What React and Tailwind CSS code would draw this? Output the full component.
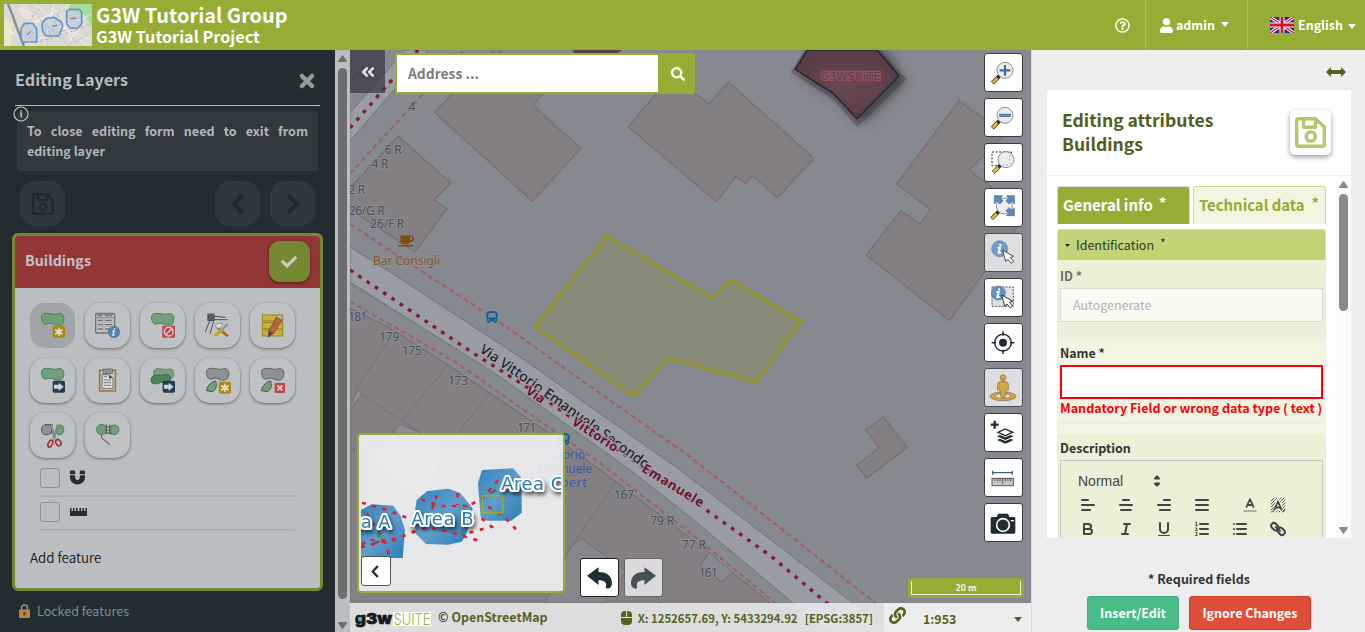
import React from 'react';
import { FaSearch, FaRegQuestionCircle, FaUser, FaCheck, FaLink, FaMagnet, FaAngleDoubleLeft, FaBus, FaCoffee } from 'react-icons/fa';

const Caret = ({ className }) => (
  <svg viewBox="0 0 10 6" className={className} fill="currentColor"><path d="M0 0H10L5 6Z" /></svg>
);

const SaveIcon = ({ className }) => (
  <svg viewBox="0 0 31 31" className={className} fill="none" stroke="currentColor" strokeWidth="3.4" strokeLinejoin="round">
    <path d="M3.5 1.7H20.5L29.3 10V27.5Q29.3 29.3 27.5 29.3H3.5Q1.7 29.3 1.7 27.5V3.5Q1.7 1.7 3.5 1.7Z" />
    <path d="M8.5 2V10.3H20.5V2" />
    <circle cx="15.8" cy="19.5" r="4.6" />
  </svg>
);

/* ---------- header ---------- */

const Thumb = () => (
  <svg viewBox="0 0 264 126" className="h-[42px] w-[88px]">
    <rect width="264" height="126" fill="#dcd8d6" />
    <path d="M0 40L26 60L20 126H0Z" fill="#e9e6cb" />
    <path d="M196 0H264V70L240 30L200 22Z" fill="#a5dd98" />
    <path d="M60 0L110 50L90 70L40 20Z" fill="#e6e1df" />
    <g stroke="#fff" strokeWidth="3" opacity=".6" fill="none">
      <path d="M60 20L264 110M90 0L250 126M150 0L120 126M20 90L200 0M60 126L264 30M180 126L240 60M0 70L90 126M210 126L170 30" />
    </g>
    <g stroke="#c9b9b5" strokeWidth="2" fill="none">
      <path d="M100 100L260 60M80 20L190 120M130 110L170 10M200 120L264 84M70 60L110 10" />
    </g>
    <path d="M12 0C30 40 40 80 60 126" stroke="#8c8c8c" strokeWidth="7" fill="none" />
    <g stroke="#dd6b5e" strokeWidth="3" strokeDasharray="4 12" fill="none">
      <path d="M70 90L100 86M130 70L165 62M196 46L236 40M110 112L240 70M84 36L96 34" />
    </g>
    <g fill="#a7c4dd" fillOpacity=".4" stroke="#5c98c9" strokeWidth="5" strokeLinejoin="round">
      <path d="M52 72L62 58H86L98 74V114H56L50 100Z" />
      <path d="M114 58L126 44L150 40L172 54L176 68L164 96H126L116 82Z" />
      <path d="M188 22L196 16H226L233 26V60L222 72H198L188 60Z" />
    </g>
    <path d="M70 92L80 82M148 66L160 64M200 44L214 42" stroke="#b2493f" strokeWidth="3" />
  </svg>
);

const Flag = () => (
  <svg viewBox="0 0 72 48" className="h-4 w-6">
    <rect width="72" height="48" fill="#1f2b7b" />
    <path d="M0 0L72 48M72 0L0 48" stroke="#fff" strokeWidth="10" />
    <path d="M0 0L72 48M72 0L0 48" stroke="#d5152e" strokeWidth="4" />
    <path d="M36 0V48M0 24H72" stroke="#fff" strokeWidth="15" />
    <path d="M36 0V48M0 24H72" stroke="#d5152e" strokeWidth="9" />
  </svg>
);

const Header = () => (
  <header className="flex h-[50px] w-full shrink-0 bg-[#95ac35] font-bold text-white">
    <div className="flex flex-1 gap-1 pl-1 pt-1">
      <Thumb />
      <div className="flex flex-col">
        <span className="text-[19.95px] leading-[22px]">G3W Tutorial Group</span>
        <span className="text-[16.23px] leading-[21px]">G3W Tutorial Project</span>
      </div>
    </div>
    <div className="flex w-[45px] items-center justify-center pr-px text-[15px]"><span><FaRegQuestionCircle /></span></div>
    <div className="flex w-[102px] items-center border-l border-[#a7bb57] pl-3.5 text-[12.4px]">
      <FaUser className="h-[15px] w-[13px]" />
      <span className="ml-[3px] leading-5">admin</span>
      <Caret className="ml-[6px] mb-0.5 h-[5px] w-2" />
    </div>
    <div className="flex w-[118px] items-center border-l border-[#a7bb57] pl-[22px] text-[12.48px]">
      <Flag />
      <span className="ml-[4px] leading-5">English</span>
      <Caret className="ml-[5px] mt-0.5 h-[5px] w-2" />
    </div>
  </header>
);

/* ---------- editing tool icons (135 x 135 grid) ---------- */

const BLOB = 'M35 49C31 35 41 30 54 31C66 32 72 36 82 33C96 29 104 37 101 52C99 67 87 68 76 65C66 61 62 59 54 62C42 66 38 61 35 49Z';
const Blob = ({ fill = '#6fa07b', stroke = '#4f7d59' }) => <path d={BLOB} fill={fill} stroke={stroke} strokeWidth="3" />;
const Badge = ({ fill }) => <rect x="68" y="68" width="37" height="36" rx="5" fill={fill} />;
const Star = () => (
  <g stroke="#e0e0d8" strokeWidth="5" strokeLinecap="round"><path d="M87 76V97M77 81L96 92M96 81L77 92" /><circle cx="87" cy="86.500" r="4" fill="#b3940f" /></g>
);
const Arrow = () => <path d="M72 80H86V74L101 86L86 99V92H72Z" fill="#ccd2d6" />;

const tools = [
  { id: 'add', active: true, icon: <><Blob /><Badge fill="#ab8c12" /><Star /></> },
  { id: 'attrs', icon: <>
    <rect x="32" y="31" width="57" height="59" rx="3" fill="#c3c5c6" stroke="#6e7173" strokeWidth="4" />
    <path d="M32 34H89M32 44H89" stroke="#8a8d8f" strokeWidth="4" />
    <path d="M38 38H52M60 38H82M38 52H54M60 52H82M38 65H54M60 65H82M38 78H54M60 78H72" stroke="#6e7173" strokeWidth="4" />
    <path d="M57 44V88M34 58H88M34 71H88" stroke="#999c9e" strokeWidth="2" />
    <circle cx="87" cy="87" r="17" fill="#5681b4" stroke="#446a98" strokeWidth="2" />
    <path d="M89 75L88 79M82 84H87L84 97H89" stroke="#dfe4ea" strokeWidth="4.500" fill="none" /></> },
  { id: 'delete', icon: <><Blob /><rect x="67" y="68" width="38" height="36" fill="#b9474c" /><circle cx="86" cy="86" r="13" fill="none" stroke="#dccaca" strokeWidth="4.500" /><path d="M77 95L95 77" stroke="#dccaca" strokeWidth="4.500" /></> },
  { id: 'vertex', icon: <>
    <rect x="37" y="32" width="22" height="22" fill="#4a4d4f" /><path d="M37 32L59 54M59 32L37 54" stroke="#8a8d8f" strokeWidth="2" />
    <path d="M58 40L92 43M56 50H98M44 54L31 86M56 54L45 92" stroke="#4d5052" strokeWidth="3" />
    <path d="M66 73L99 100" stroke="#9f6c1d" strokeWidth="8" /><path d="M60 68C70 56 82 62 84 64L72 78Z" fill="#dadcdc" stroke="#6f7274" strokeWidth="2" />
    <path d="M98 62L82 80" stroke="#8b8e90" strokeWidth="6" /><path d="M81 80L60 98" stroke="#c5a528" strokeWidth="10" /></> },
  { id: 'multiattrs', icon: <>
    <g fill="#c9b23b" stroke="#97811e" strokeWidth="3"><rect x="37" y="36" width="61" height="18" /><rect x="37" y="59" width="61" height="18" /><rect x="37" y="81" width="61" height="18" /></g>
    <path d="M56 84L84 34L100 43L72 90L55 102Z" fill="#b5643b" stroke="#6e4433" strokeWidth="2" /><path d="M84 34L100 43L96 50L80 41Z" fill="#b4b6b7" /><path d="M57 84L71 91L54 103Z" fill="#474b4d" /></> },
  { id: 'move', icon: <><Blob /><Badge fill="#243c50" /><Arrow /></> },
  { id: 'paste', icon: <>
    <rect x="44" y="37" width="47" height="62" fill="#c9cbcc" stroke="#a17734" strokeWidth="5" /><rect x="54" y="33" width="28" height="14" fill="#8f9293" stroke="#5c5f61" strokeWidth="2" />
    <path d="M51 50H72L84 61V92H51Z" fill="#d9dadb" stroke="#6e7173" strokeWidth="3" /><path d="M56 56H66M56 66H78M56 74H78M56 82H78" stroke="#777a7c" strokeWidth="3" /><path d="M72 50V61H84" fill="#444" /></> },
  { id: 'copy', icon: <>
    <g transform="translate(10 4) scale(.9)"><Blob fill="#7c9c80" stroke="#617e66" /></g>
    <path d="M33 68C33 54 42 50 52 51C66 55 74 48 84 50C96 54 92 72 82 74C70 74 66 70 56 76C42 80 33 76 33 68Z" fill="#4e8556" stroke="#3b6a43" strokeWidth="3" /><Badge fill="#243c50" /><Arrow /></> },
  { id: 'addpart', icon: <><Blob fill="#8e9193" stroke="#606365" /><path d="M34 98C38 80 52 70 62 69C66 82 64 96 52 101Z" fill="#6fa07b" stroke="#42574a" strokeWidth="3" /><g transform="translate(3 3)"><Badge fill="#ab8c12" /><Star /></g></> },
  { id: 'deletepart', icon: <><Blob fill="#8e9193" stroke="#606365" /><path d="M34 98C38 80 52 70 62 69C66 82 64 96 52 101Z" fill="#6fa07b" stroke="#42574a" strokeWidth="3" /><rect x="74" y="74" width="31" height="31" rx="4" fill="#b9474c" /><path d="M82 82L97 97M97 82L82 97" stroke="#dccaca" strokeWidth="6" /></> },
  { id: 'split', icon: <>
    <path d="M35 55C32 38 44 32 60 35L66 34L64 60C54 68 38 68 35 55Z" fill="#8e9193" stroke="#4f5254" strokeWidth="3" />
    <path d="M82 38C94 32 104 40 101 54C98 66 88 67 80 62Z" fill="#6fa07b" stroke="#4f7d59" strokeWidth="3" />
    <path d="M66 34L72 76L76 76L84 36L74 58Z" fill="#8d9092" /><path d="M64 34L72 80M82 34L72 80" stroke="#85888a" strokeWidth="5" />
    <ellipse cx="61" cy="92" rx="6" ry="11" transform="rotate(25 61 92)" fill="none" stroke="#9c2f3a" strokeWidth="5" /><ellipse cx="85" cy="89" rx="7" ry="10" transform="rotate(-35 85 89)" fill="none" stroke="#9c2f3a" strokeWidth="5" /></> },
  { id: 'merge', icon: <>
    <path d="M35 53C33 38 44 32 58 36L64 40V58C54 68 39 68 35 53Z" fill="#6fa07b" stroke="#4f7d59" strokeWidth="3" />
    <path d="M74 40C88 32 104 36 101 54C98 66 84 68 74 60Z" fill="#6fa07b" stroke="#4f7d59" strokeWidth="3" />
    <path d="M60 42H80M60 51H80M60 60H80M65 34V64M74 35V64" stroke="#4d5052" strokeWidth="2.500" /><path d="M50 66C46 82 62 78 74 96" stroke="#63676a" strokeWidth="3.500" fill="none" /></> },
];

const SideButton = ({ children }) => (
  <div className="flex size-[45px] items-center justify-center rounded-[15px] bg-[#2f383e] text-[#20292e]">{children}</div>
);

const Sidebar = () => (
  <aside className="flex w-[335px] shrink-0 flex-col bg-[#222d32]">
    <div className="ml-[15px] mr-[15px] flex h-[56px] items-center justify-between border-b border-[#b9bcbf] pt-0.5">
      <h2 className="text-[16.19px] font-bold leading-6 text-[#b8bbbe]">Editing Layers</h2>
      <svg viewBox="0 0 16 16" className="mr-[5px] mt-1 size-4" fill="none" stroke="#97999c" strokeWidth="4.500" strokeLinecap="round"><path d="M3 3L13 13M13 3L3 13" /></svg>
    </div>
    <div className="relative ml-[17px] mr-[17px] mt-[5px] h-[60px] rounded-[3px] bg-[#30393e] p-2.5 text-justify text-[12.56px] font-bold leading-5 text-[#b3b6b9]">
      <svg viewBox="0 0 16 16" className="absolute -left-[4px] -top-[5px] size-4" fill="none" stroke="#c3c6c9" strokeWidth="1.200"><circle cx="8" cy="8" r="7" /><path d="M8 4.200V5.600M7 7.200H8.300V11.500" strokeWidth="1.500" /></svg>
      To close editing form need to exit from editing layer
    </div>
    <div className="ml-5 mr-5 mt-2.5 flex">
      <SideButton><SaveIcon className="size-[22px]" /></SideButton>
      <div className="ml-auto flex gap-2.5">
        <SideButton><svg viewBox="0 0 24 24" className="size-6" fill="none" stroke="currentColor" strokeWidth="4"><path d="M17 3L8 12L17 21" /></svg></SideButton>
        <SideButton><svg viewBox="0 0 24 24" className="size-6" fill="none" stroke="currentColor" strokeWidth="4"><path d="M7 3L16 12L7 21" /></svg></SideButton>
      </div>
    </div>
    <section className="ml-3 mt-[7px] flex h-[358px] w-[311px] flex-col overflow-hidden rounded-[6px] border-[3px] border-[#748932] bg-[#bbbec1]">
      <div className="flex h-[52px] shrink-0 items-start justify-between bg-[#933636] pl-2.5 pr-2.5 pt-[5px]">
        <h3 className="mt-[9px] text-[14.29px] font-bold leading-5 text-[#c3c2c5]">Buildings</h3>
        <div className="flex size-[41px] items-center justify-center rounded-[11px] bg-[#748932] shadow-[0_1px_3px_rgba(0,0,0,0.5)]"><FaCheck className="mr-px size-4 text-[#c8cacb]" /></div>
      </div>
      <div className="ml-[15px] mt-[15px] grid grid-cols-[repeat(5,45px)] gap-2.5">
        {tools.map((t) => (
          <div key={t.id} className={t.active ? 'size-[45px] rounded-[15px] bg-[#a2a5a8]' : 'size-[45px] rounded-[15px] bg-[#bfc2c5] shadow-[0_1px_3px_rgba(0,0,0,0.45)]'}>
            <svg viewBox="0 0 135 135" className="size-[45px]">{t.icon}</svg>
          </div>
        ))}
      </div>
      <div className="ml-[25px] mt-[10px] flex h-[29px] w-[255px] items-start border-b-2 border-[#acafb2] pb-2">
        <span className="size-5 rounded-[3px] border border-[#8f9294]" />
        <FaMagnet className="ml-[10px] mt-[2px] size-[15px] text-[#222d32]" />
      </div>
      <div className="ml-[25px] mt-[5px] flex h-[29px] w-[255px] items-start border-b-2 border-[#acafb2] pb-2">
        <span className="size-5 rounded-[3px] border border-[#8f9294]" />
        <svg viewBox="0 0 17 8" className="ml-[10px] mt-1.5 h-2 w-[17px]"><path d="M0 0H1.500V3H3V0H4.500V3H6V0H7.500V3H9.500V0H11V3H12.500V0H14V3H15.500V0H17V8H0Z" fill="#222d32" /></svg>
      </div>
      <p className="ml-[15px] mt-[14px] text-[13.4px] font-[350] leading-6 text-[#15191b]">Add feature</p>
    </section>
    <div className="ml-[19px] mt-2.5 flex h-5 items-center gap-[7px] text-[12.5px] leading-5 text-[#7a8f98]">
      <svg viewBox="0 0 11 14" className="h-3.5 w-[11px]"><path d="M2.500 6V4a3 3 0 0 1 6 0V6" fill="none" stroke="#8f9294" strokeWidth="1.500" /><rect y="5.500" width="11" height="8.500" rx="1" fill="#bd8440" /><path d="M5.500 8V11.500" stroke="#4c3c3a" strokeWidth="2" /></svg>
      Locked features
    </div>
  </aside>
);

const Arrowhead = ({ down }) => (
  <svg viewBox="0 0 9 7" className={down ? 'h-[7px] w-[9px] rotate-180' : 'h-[7px] w-[9px]'} fill="currentColor"><path d="M4 .4Q4.500 0 5 .4L9 6Q9 7 8 7H1Q0 7 0 6Z" /></svg>
);

/* ---------- map ---------- */

const houseNumbers = [
  ['4', 411.7, 111, 6], ['6 R', 393.3, 153.500, 17], ['4 R', 380, 168, 17], ['2 R', 356.7, 194, 17], ['26/G R', 366.7, 215, 36], ['26/F R', 387.3, 228, 34],
  ['181', 357.7, 321, 19], ['179', 389.3, 341, 20], ['175', 411.7, 355, 20], ['173', 458, 385, 20], ['171', 526.7, 432, 19],
  ['167', 624, 499, 20], ['79 R', 662.3, 525, 24], ['77 R', 694, 549, 24], ['161', 708.3, 577, 19], ['159', 781.7, 616, 19],
];

const MapCanvas = () => (
  <svg viewBox="350 50 681 582" className="h-[582px] w-[681px]" fontFamily="'Noto Sans', sans-serif">
    <defs>
      <filter id="shade" x="-50%" y="-50%" width="200%" height="200%"><feGaussianBlur stdDeviation="6" /></filter>
      <radialGradient id="red"><stop offset="0" stopColor="#6a4750" /><stop offset="1" stopColor="#5a3d48" /></radialGradient>
    </defs>
    <rect x="350" y="50" width="681" height="582" fill="#868990" />
    <path d="M350 113L405 50H428L350 141Z" fill="#9a9ca5" stroke="#74767e" />
    <g fill="#837f82" stroke="#786f73" strokeWidth="1.200">
      <path d="M398 136L451 183L434 200L447 209L415 252L350 209V188Z" />
      <path d="M434.300 112.300L497 47L520 72L560 72L533.300 106L581 148.300L532.300 201.300Z" />
      <path d="M628 126.700L661 88L695 93L709 104L728.300 82L814 158.300L777.700 197.700L752 175.300L746 184L736 176.700L716.700 202Z" />
      <path d="M959.300 100.700L1005 134L969.300 170L991.700 187.300L1018 226L949.300 320.700L866 255L901 210.700L920 224L930.300 209.300L896.700 184Z" />
      <path d="M883.300 416.700L865.700 430L879 447.700L856.700 465L866.700 478.300L907 447.700Z" />
      <path d="M350 308L388 327L448 365L490 393L540 427L607 475L710 553L700 565L722 582L732 572L806 632H350Z" />
    </g>
    <g fill="none" stroke="#786f73">
      <path d="M388 341.700L355 390L401.700 420.700L448 365M490 393L443 452M401.700 420.700L445 450M350 447L400 480M616 482L570 548L628 572M644 560L660 603" />
      <path d="M351 405L357 390L362 394L351 408Z" fill="#8b8d93" />
      <path d="M400 424L446 444L425 500L371 462Z" fill="#8b8d93" />
      <path d="M570 548L581 538L626 571L604 603H545Z" fill="#86868d" />
      <path d="M700 565L722 582L732 572L710 553Z" fill="#868990" />
    </g>
    <path d="M350 247L387 270L520 357L680 470L853 603L890 632H831L793 603L690 517L630 470L493 372L350 283Z" fill="#9a9ca5" stroke="#70727a" />
    <path d="M350 282L493 372L630 470L690 517L793 603" fill="none" stroke="#787a82" />
    <g fill="none" stroke="#7e90a3" strokeWidth="2" strokeDasharray="4 3"><path d="M350 171L463 49" /></g>
    <g fill="none" stroke="#a85c5f" strokeWidth="2" strokeDasharray="5 3.500">
      <path d="M350 81.700L376.700 50" /><path d="M350 173.500L463 50.500" />
      <path d="M350 224L435 280L491.700 316.700L690 456.700L880 606.700" />
      <path d="M350 301.700L455 361.700L600 463L690 533L780 606.700" />
    </g>
    <g fill="none" stroke="#8b1a2c" strokeWidth="3.400" strokeDasharray="3.800 6.200">
      <path d="M350 128L418 50" />
      <path d="M350 270L473 353L527 387L640 465L701.700 506.700L771.700 556.700L826.700 603L855 628" />
    </g>
    <g>
      <path d="M804 50L790.700 72.300L834 100L857 127.300L906.700 79.300L880 50Z" fill="#716b70" />
      <path d="M812 55L800 74L840 100L862 124L905 82L885 50Z" fill="#33323a" opacity=".75" filter="url(#shade)" />
      <path d="M807.300 50L795.300 69.300L833.300 93.300L857 118.700L899 75.700L877 50Z" fill="url(#red)" stroke="#1f2731" strokeWidth="1.500" />
      <path d="M572 50H622L618 53H574Z" fill="#5a3d48" />
      <text x="820.500" y="80" textLength="60" fontFamily="'DejaVu Sans', sans-serif" fontSize="11" fill="#54405a" stroke="#94505c" strokeWidth="2.500" paintOrder="stroke">G3WSUITE</text>
    </g>
    <path d="M606.700 236L535 326.700L633.300 396L669.300 358.300L756 382L801 321.300L730.700 280L712.300 298Z" fill="#888b79" stroke="#919239" strokeWidth="3.800" />
    <g fontSize="12" fill="#4b4e58" textAnchor="middle" stroke="#92949b" strokeOpacity=".7" strokeWidth="2" paintOrder="stroke">
      {houseNumbers.map(([t, x, y, w]) => <text key={t} x={x} y={y} textLength={w}>{t}</text>)}
    </g>
    <FaCoffee x="398" y="233" size="16" color="#7f4d12" />
    <text x="373" y="264.500" fontSize="12" textLength="67" fill="#80592d" stroke="#92949b" strokeOpacity=".6" strokeWidth="2" paintOrder="stroke">Bar Consigli</text>
    <FaBus x="486" y="311" size="12" color="#10639a" />
    <FaBus x="558" y="433" size="12" color="#10639a" />
    <g fontSize="12" fill="#3a5daa" textAnchor="middle">
      <text x="564.500" y="458.500" textLength="41">Vittorio</text><text x="564.500" y="472.500" textLength="55">Emanuele</text><text x="564.500" y="486.500" textLength="44">Filibert</text>
    </g>
    <path id="street" d="M479 352Q555 402 700 510" fill="none" />
    <text fontSize="14" fontWeight="500" fill="#20232b" stroke="#a0a2aa" strokeWidth="2" paintOrder="stroke"><textPath href="#street" textLength="204">Via Vittorio Emanuele Secondo</textPath></text>
    <g fontWeight="700" fill="#6d1231" stroke="#a0a2aa" strokeWidth="2" paintOrder="stroke">
      <text transform="translate(525 393) rotate(34)" textLength="20" fontSize="13">Via</text>
      <text transform="translate(571 424) rotate(33)" textLength="52" fontSize="13">Vittorio</text>
      <text transform="translate(641 471) rotate(31.500)" textLength="70" fontSize="13">Emanuele</text>
    </g>
  </svg>
);

const Glass = ({ cx = 63, cy = 52 }) => (
  <>
    <path d={`M${cx - 20} ${cy + 20}L${cx - 38} ${cy + 38}`} stroke="#3b3417" strokeWidth="12" />
    <path d={`M${cx - 22} ${cy + 22}L${cx - 37} ${cy + 37}`} stroke="#e9bf3b" strokeWidth="8" />
    <circle cx={cx - 19} cy={cy + 19} r="6" fill="#2b2b2b" />
    <circle cx={cx} cy={cy} r="24" fill="#ececec" stroke="#8b8e90" strokeWidth="3" />
  </>
);
const InfoDot = ({ x, y, r }) => (
  <>
    <circle cx={x} cy={y} r={r} fill="#628fc5" stroke="#4e78ab" strokeWidth="2" />
    <path transform={`translate(${x} ${y})`} d="M3 -14L1 -8M-6 -3H1L-3 12H4" stroke="#fff" strokeWidth="6" fill="none" />
  </>
);
const Cursor = ({ x, y }) => <path transform={`translate(${x} ${y})`} d="M0 0L9 33L16 27L26 39L33 33L23 22L33 18Z" fill="#fff" stroke="#333" strokeWidth="3" strokeLinejoin="round" />;

const mapTools = [
  { id: 'zoomin', icon: <><Glass /><path d="M63 36V68M47 52H79" stroke="#3c6ea8" strokeWidth="7" /></> },
  { id: 'zoomout', icon: <><Glass /><path d="M46 52H80" stroke="#2f5b91" strokeWidth="9" /><path d="M48 52H78" stroke="#5f93cf" strokeWidth="5" /></> },
  { id: 'zoombox', icon: <><rect x="24" y="27" width="58" height="41" fill="none" stroke="#222" strokeWidth="3" strokeDasharray="6 5" /><Glass cx={66} cy={50} /><path d="M78 36V62M55 66H78" stroke="#bbb" strokeWidth="3" strokeDasharray="6 5" /></> },
  { id: 'extent', icon: <><Glass cx={61} cy={54} /><g fill="#5b8bbd" stroke="#3d6c9e" strokeWidth="2"><path d="M31 23H56L49 31L57 39L48 48L39 40L31 48Z" /><path d="M91 23H67L74 31L66 39L75 48L83 40L91 48Z" /><path d="M91 83H67L74 76L66 68L75 59L83 67L91 59Z" /></g></> },
  { id: 'query', dim: true, icon: <g opacity=".85"><InfoDot x={47} y={47} r={24} /><Cursor x={56} y={52} /></g> },
  { id: 'querybox', icon: <><rect x="24" y="27" width="64" height="58" fill="#e2e2e2" stroke="#444" strokeWidth="2.500" strokeDasharray="7 3" /><InfoDot x={43} y={45} r={21} /><Cursor x={53} y={51} /></> },
  { id: 'locate', icon: <g stroke="#222d32" fill="none" strokeWidth="4.500"><circle cx="57" cy="59" r="25" /><circle cx="57" cy="59" r="9" fill="#222d32" strokeWidth="6" /><path d="M57 25V38M57 80V93M23 59H36M78 59H91" /></g> },
  { id: 'street', dim: true, icon: <g fill="#d7a73d" stroke="#8b7a55" strokeWidth="2.500"><path fillRule="evenodd" d="M18 85A39 13 0 0 0 96 85A39 13 0 0 0 18 85ZM33 84A24 7 0 0 1 81 84A24 7 0 0 1 33 84Z" /><path d="M45 42Q57 38 69 42Q74 44 73 52V66H66L63 88H51L48 66H41V52Q40 44 45 42Z" /><circle cx="57" cy="29" r="8.500" /></g> },
  { id: 'addlayer', icon: <g><path d="M32 23V47M20 35H44" stroke="#222d32" strokeWidth="7" /><g fill="#222d32"><path d="M39 81L64 92L89 81L80 77L64 84L48 77Z" /><path d="M39 70L64 81L89 70L80 66L64 73L48 66Z" /></g><path d="M42 58L64 48L86 58L64 68Z" fill="#fff" stroke="#222d32" strokeWidth="4" /></g> },
  { id: 'measure', icon: <><path d="M26 44H85M26 38V50M85 38V50" stroke="#3f5f86" strokeWidth="4" /><rect x="24" y="61" width="64" height="22" fill="#c6c6c4" stroke="#555" strokeWidth="3" /><path d="M33 62V70M41 62V70M48 62V70M56 62V78M64 62V70M72 62V70M80 62V70" stroke="#555" strokeWidth="3" /></> },
  { id: 'photo', icon: <><path d="M20 46Q20 42 24 42H38L42 32H72L76 42H90Q94 42 94 46V88Q94 92 90 92H24Q20 92 20 88Z" fill="#222d32" /><circle cx="57" cy="66" r="19" fill="#222d32" stroke="#fff" strokeWidth="5" /><path d="M80 53H90" stroke="#fff" strokeWidth="4" /></> },
];

const MiniMap = () => (
  <div className="absolute left-[7px] top-[383px] flex h-[160px] w-[208px] items-end rounded-[4px] border-2 border-[#95ac35] bg-[#f9f9fad8]">
    <svg viewBox="57 15 612 468" className="absolute left-0 top-0 h-[156px] w-[204px]">
      <defs>
        <linearGradient id="sea" x1="0" y1="0" x2="1" y2="1"><stop offset="0" stopColor="#3184c0" /><stop offset=".5" stopColor="#5f9dcb" /><stop offset="1" stopColor="#2b7cb8" /></linearGradient>
        <filter id="halo" x="-20%" y="-30%" width="150%" height="180%"><feDropShadow dx="5" dy="9" stdDeviation="6" floodColor="#000" floodOpacity=".6" /></filter>
        <clipPath id="view"><rect x="63" y="15" width="600" height="463" /></clipPath>
      </defs>
      <g clipPath="url(#view)">
        <g fill="url(#sea)">
          <path d="M426 120L520 115L545 145V248L514 272H440L422 262L414 160Z" />
          <path d="M230 210L262 183L325 176L360 188L398 235L380 310L365 335L325 344L258 342L228 312L222 262Z" />
          <path d="M63 240L95 223L160 227L182 258L195 300L188 384H63Z" />
        </g>
        <g stroke="#e0202c" strokeWidth="8" strokeDasharray="12 20" fill="none" strokeLinecap="butt">
          <path d="M66 218L140 240L205 265" /><path d="M62 352L180 322L260 292L330 306L425 335" /><path d="M80 250L140 345L148 384" /><path d="M66 345L80 330L170 330" />
          <path d="M244 208L300 228L385 228" /><path d="M291 196L276 236" /><path d="M353 190L352 225" /><path d="M395 222L425 208L485 138" /><path d="M445 230L490 258L530 300" /><path d="M425 265L455 290L365 314" /><path d="M215 308L245 290" />
        </g>
        <path d="M112 308L120 322" stroke="#3c9a4c" strokeWidth="10" /><path d="M100 340L118 334M450 190L468 180" stroke="#7c4b5c" strokeWidth="7" />
        <path d="M428 197H488V248H428Z" fill="none" stroke="#95ac35" strokeWidth="5" />
        <g filter="url(#halo)" fontFamily="'DejaVu Sans', sans-serif" fontSize="54" fill="#2b7ab8" stroke="#fff" strokeWidth="12" strokeLinejoin="round" paintOrder="stroke">
          <text x="484" y="181" textLength="186">Area C</text><text x="214" y="285" textLength="187">Area B</text><text x="-32" y="293" textLength="184">Area A</text>
        </g>
      </g>
    </svg>
    <div className="relative mb-[5px] ml-[2px] flex size-[30px] items-center justify-center rounded-[3px] border border-[#555] bg-white">
      <svg viewBox="0 0 14 14" className="mr-0.5 size-[13px]" fill="none" stroke="#222d32" strokeWidth="2.500"><path d="M9.500 1L4 7L9.500 13" /></svg>
    </div>
  </div>
);

const UndoArrow = ({ flip }) => (
  <svg viewBox="741 416 76 66" className={flip ? 'h-[22px] w-[25px] -scale-x-100' : 'h-[22px] w-[25px]'}><path d="M741 442L776 416V431C804 431 817 446 817 464C817 471 814 478 808 480C804 482 798 481 798 478C803 463 794 456 776 456V470Z" fill="#222d32" /></svg>
);

const MapView = () => (
  <main className="relative h-[582px] w-[681px] shrink-0 overflow-hidden">
    <MapCanvas />
    <div className="absolute left-0 top-0 flex h-[43px] w-[35px] items-center justify-center bg-[#33333cb0] text-[#e6e7e8]"><FaAngleDoubleLeft className="size-4" /></div>
    <div className="absolute left-[45px] top-[3px] flex h-[41px] w-[300px] rounded-[2px] border-2 border-[#95ac35] bg-[#95ac35]">
      <div className="flex w-[261px] items-center bg-white pl-[11px] text-[13.85px] font-bold text-[#7b7b7b]">Address ...</div>
      <div className="flex flex-1 items-center justify-center pl-1 text-white"><FaSearch className="size-[14px]" /></div>
    </div>
    <div className="absolute right-2 top-[3px] flex flex-col gap-1.5">
      {mapTools.map((t) => (
        <div key={t.id} className={t.dim ? 'size-[39px] rounded-[3px] border border-[#4c4e53] bg-[#dddee0]' : 'size-[39px] rounded-[3px] border border-[#3a3c40] bg-white'}>
          <svg viewBox="3 3 111 111" className="size-[37px]">{t.icon}</svg>
        </div>
      ))}
    </div>
    <MiniMap />
    <div className="absolute left-[230px] top-[508px] flex gap-[5px]">
      <div className="flex size-[39px] items-center justify-center rounded-[3px] border border-[#222] bg-white"><UndoArrow /></div>
      <div className="flex size-[39px] items-center justify-center rounded-[3px] border border-[#666] bg-[#dadadc]"><span className="opacity-80"><UndoArrow flip /></span></div>
    </div>
    <div className="absolute bottom-[34px] right-[7px] flex h-5 w-[116px] rounded-[4px] bg-[#95ac35] p-[3px]">
      <div className="flex-1 border border-t-0 border-[#eef1e0] text-center text-[8.86px] font-bold leading-[14px] text-[#f3f5ea]">20 m</div>
    </div>
    <footer className="absolute bottom-0 left-0 flex h-[29px] w-full text-[#55631e]">
      <div className="flex w-[534px] items-center bg-[#ededeed9] pl-[5px]">
        <svg viewBox="0 0 76 16" className="mt-1 h-4 w-[76px]" fontFamily="Inter, sans-serif">
          <rect x="38" width="38" height="14" fill="#fff" />
          <text x="0" y="12" fontSize="15" fontWeight="900" textLength="37" lengthAdjust="spacingAndGlyphs" fill="#17191b" stroke="#17191b" strokeWidth=".6">g3w</text>
          <circle cx="5" cy="7" r="2.200" fill="#3db7a8" />
          <text x="38.500" y="12.500" fontSize="16" fontWeight="300" textLength="37" lengthAdjust="spacingAndGlyphs" fill="#9cb03c">SUITE</text>
        </svg>
        <span className="ml-[7px] mb-px text-[12.45px] font-bold leading-5"><span className="mr-[3px] font-medium text-[#333]">©</span>OpenStreetMap</span>
        <svg viewBox="0 0 11 14" className="ml-auto h-3.5 w-[11px]" fill="currentColor"><path d="M0 6V4Q0 0 4 0H5V6ZM6 0H7Q11 0 11 4V6H6ZM0 7H11V10Q11 14 7 14H4Q0 14 0 10Z" /></svg>
        <span className="ml-[6px] mt-px w-[160px] whitespace-nowrap text-[11.35px] font-bold leading-5">X: 1252657.69, Y: 5433294.92</span>
        <span className="ml-[7px] mr-[11px] mt-px whitespace-nowrap text-[11.3px] font-bold leading-5">[EPSG:3857]</span>
      </div>
      <div className="flex flex-1 items-center bg-[#ededed] pl-[5px] pr-[9px]">
        <FaLink className="mb-1 size-[17px]" />
        <span className="ml-[17px] mt-0.5 text-[12.4px] font-bold leading-5">1:953</span>
        <Caret className="ml-auto mt-1 h-[5px] w-2" />
      </div>
    </footer>
  </main>
);

/* ---------- attribute form ---------- */

const EditorIcon = ({ children }) => <svg viewBox="0 0 18 18" className="size-[18px]" fill="none" stroke="#444" strokeWidth="2" strokeLinecap="round" strokeLinejoin="round">{children}</svg>;

const alignRow = [
  ['left', <path d="M3 9H15M3 14H11M3 4H9" />],
  ['center', <path d="M3 9H15M4 14H14M6 4H12" />],
  ['right', <path d="M3 9H15M5 14H15M9 4H15" />],
  ['justify', <path d="M3 9H15M3 14H15M3 4H15" />],
];
const fontRow = [
  ['bold', <path d="M5 4H9.500A2.500 2.500 0 0 1 9.500 9H5ZM5 9H10.500A2.500 2.500 0 0 1 10.500 14H5Z" />],
  ['italic', <path d="M7 4H13M5 14H11M8 14L10 4" />],
  ['underline', <><path d="M5 3V9A4 4 0 0 0 13 9V3" /><path d="M3.500 15.500H14.500" strokeWidth="1" /></>],
  ['ordered', <><path d="M7 4H15M7 9H15M7 14H15" /><path d="M2.500 2.500L3.500 2V5.500M2.500 5.500H4.500M2.500 8H4.200L2.500 10.500H4.500M2.500 12.500H4.300L3.300 14L4.300 15.500H2.500" strokeWidth=".9" /></>],
  ['bullet', <><path d="M6 4H15M6 9H15M6 14H15" /><path d="M3 4H3.010M3 9H3.010M3 14H3.010" /></>],
];

const Field = ({ label, className, labelClass, children }) => (
  <div className={className}>
    <label className={labelClass}>{label}</label>
    {children}
  </div>
);

const FormPanel = () => (
  <aside className="flex w-[334px] flex-col border-l border-[#d9d9dc] bg-[#ededed] pl-[15px] pr-[14px]">
    <div className="flex h-10 items-center justify-end pr-[5px] pt-1 text-[#52611c]">
      <svg viewBox="0 0 20 10" className="h-2.5 w-5" fill="currentColor"><path d="M0 5L5 0V3H15V0L20 5L15 10V7H5V10Z" /></svg>
    </div>
    <div className="flex h-[448px] flex-col bg-white">
      <div className="flex h-[86px] shrink-0 justify-between border-b border-[#efefef] pl-[15px] pr-5 pt-[18px]">
        <h2 className="w-[170px] text-[17.55px] font-bold leading-6 text-[#505e1b]">Editing attributes Buildings</h2>
        <div className="mt-0.5 flex h-[45px] w-[41px] items-center justify-center rounded-[5px] bg-white text-[#b5c66d] shadow-[0_2px_5px_rgba(0,0,0,0.4)]"><SaveIcon className="size-[31px]" /></div>
      </div>
      <div className="flex min-h-0 flex-1">
        <div className="flex w-[289px] flex-col overflow-hidden pl-2.5 pr-2.5 pt-2.5">
          <div className="flex shrink-0 justify-between">
            <div className="flex h-[38px] w-[133px] items-center rounded-t-[3px] border border-b-0 border-[#d8d8d8] bg-[#95ac35] pl-[5px] text-[15px] font-bold text-white">General info<span className="mb-1 ml-[6px]">*</span></div>
            <div className="flex h-[38px] w-[133px] items-center rounded-t-[3px] border border-b-0 border-[#cfdb92] bg-[#f3f5e2] pl-[5px] text-[14.9px] font-bold text-[#95ac35]">Technical data<span className="mb-1 ml-[7px]">*</span></div>
          </div>
          <div className="mt-[5px] flex h-[31px] shrink-0 items-center rounded-t-[3px] border border-b-0 border-[#d5dabf] bg-[#c1d576] pl-[7px] text-[12.5px] text-[#333]">
            <Caret className="mr-[6px] h-[5px] w-[5px] text-[#222]" />Identification<span className="mb-1 ml-[6px]">*</span>
          </div>
          <Field label="ID *" className="flex h-[79px] shrink-0 flex-col bg-[#ecf0d6] px-[3px] pt-1.5" labelClass="text-[12.4px] font-bold leading-5 text-[#6d6f66]">
            <div className="mt-[2px] flex h-[34px] items-center border border-[#d9dbd2] bg-[#fafaf3] pl-3 text-[12.5px] text-[#b3b4ad]">Autogenerate</div>
            <hr className="mt-[5px] border-t-2 border-[#ecebee]" />
          </Field>
          <Field label="Name *" className="flex h-[95px] shrink-0 flex-col bg-[#f3f5e2] px-[3px] pt-1" labelClass="text-[12.4px] font-bold leading-5 text-[#333]">
            <div className="mt-[2px] h-[34px] border-2 border-[#fb0007] bg-white" />
            <p className="whitespace-nowrap text-[12.55px] font-bold leading-[18px] text-[#fb0007]">Mandatory Field or wrong data type ( text )</p>
            <hr className="mt-[5px] border-t-2 border-[#ecebee]" />
          </Field>
          <Field label="Description" className="flex h-[140px] shrink-0 flex-col bg-[#ecf0d6] px-[3px] pt-1" labelClass="text-[12.5px] font-bold leading-5 text-[#333]">
            <div className="mt-[2px] h-[120px] shrink-0 border border-[#c8c9c4] pl-[18px] pt-2">
              <div className="-ml-px flex h-6 items-center font-['Liberation_Sans',sans-serif] text-sm font-medium text-[#444]">
                <span className="w-[70px]">Normal</span>
                <svg viewBox="0 0 18 18" className="size-[18px]" fill="#444" stroke="#444" strokeWidth="2" strokeLinejoin="round"><path d="M7 11.500L9 13.500L11 11.500ZM7 6.500L9 4.500L11 6.500Z" /></svg>
              </div>
              <div className="flex h-6 items-center gap-5">
                {alignRow.map(([id, icon]) => <EditorIcon key={id}>{icon}</EditorIcon>)}
                <div className="ml-[10px] flex gap-[10px]">
                  <EditorIcon><path d="M3 15H15" stroke="#aeb0a2" /><path d="M5.500 11L9 3L12.500 11M6.500 9H11.500" strokeWidth="1.800" /></EditorIcon>
                  <EditorIcon><path d="M2 5L5 2M2 8L8 2M2 11L6 7M2 14L5 11M2 16.500L6 12.500M11 3L12 2M11.500 5.500L15 2M13 7L16 4M13.500 9.500L16 7M14 12L16 10M14 15L16 13M10 16L11 15M7 16L8 15M4 16L5 15M13.500 16L16 14.500" strokeWidth=".9" /><path d="M5.500 13.500L9 5.500L12.500 13.500M6.500 11.500H11.500" strokeWidth="1.800" /></EditorIcon>
                </div>
              </div>
              <div className="flex h-6 items-center gap-5">
                {fontRow.map(([id, icon]) => <EditorIcon key={id}>{icon}</EditorIcon>)}
                <EditorIcon><rect x="2" y="4" width="8" height="5.500" rx="2.700" transform="rotate(45 6 6.500)" /><rect x="8" y="8.500" width="8" height="5.500" rx="2.700" transform="rotate(45 12 11.500)" /><path d="M7 7L11 11" /></EditorIcon>
              </div>
            </div>
          </Field>
        </div>
        <div className="flex flex-1 flex-col items-center bg-[#fbfbfb] pb-[4px] pt-[5px] text-[#8a8a8a]">
          <Arrowhead />
          <div className="mt-1.5 h-[117px] w-[9px] rounded-full bg-[#8a8a8a]" />
          <div className="mt-auto"><Arrowhead down /></div>
        </div>
      </div>
    </div>
    <p className="mt-[31px] text-center text-[12.5px] font-bold leading-5 text-[#333]">* Required fields</p>
    <div className="mt-[7px] flex justify-center gap-2.5 text-[12.5px] font-bold text-white">
      <button className="h-[34px] w-[92px] rounded-[3px] border border-[#40ad7b] bg-[#48bd88]">Insert/Edit</button>
      <button className="h-[34px] w-[122px] rounded-[3px] border border-[#d73925] bg-[#df4e3b]">Ignore Changes</button>
    </div>
  </aside>
);

export default function App() {
  return (
    <div className="flex h-[632px] w-[1365px] flex-col overflow-hidden font-['Noto_Sans_CJK_SC',sans-serif]">
      <Header />
      <div className="flex min-h-0 flex-1">
        <Sidebar />
        <div className="flex w-[15px] shrink-0 flex-col items-center bg-[#bbbec1] pb-[3px] pt-[5px] text-[#6a6e6f]">
          <Arrowhead />
          <div className="mt-1.5 h-[531px] w-[9px] rounded-full bg-[#6a6e6f]" />
          <div className="mt-auto"><Arrowhead down /></div>
        </div>
        <MapView />
        <FormPanel />
      </div>
    </div>
  );
}
